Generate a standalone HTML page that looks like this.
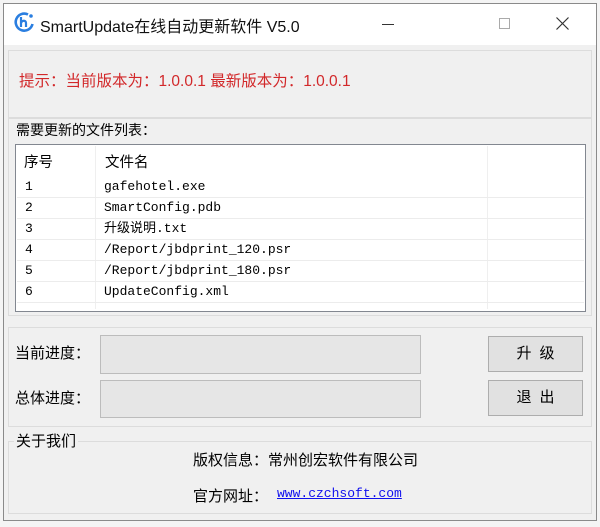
<!DOCTYPE html>
<html><head><meta charset="utf-8"><style>
*{margin:0;padding:0;box-sizing:border-box}
body{width:600px;height:527px;background:#f4f4f4;position:relative;overflow:hidden;font-family:"Liberation Sans","Noto Sans CJK SC",sans-serif;font-size:14px;color:#000}
.a{position:absolute}
.win{left:3px;top:3px;width:594px;height:518px;border:1px solid #8a8a8a;background:#f0f0f0}
.title{left:4px;top:4px;width:592px;height:41px;background:#fff}
.panel{border:1px solid #dcdcdc}
.mono{font-family:"Liberation Mono","Noto Sans CJK SC",monospace;font-size:13px}
.row{left:17px;width:567px;height:21px;border-bottom:1px solid #ececec}
.prog{background:#e6e6e6;border:1px solid #bcbcbc}
.btn{background:#e1e1e1;border:1px solid #adadad;text-align:center;line-height:34px;font-size:15px;letter-spacing:8px;text-indent:8px}
</style></head><body>
<div class="a win"></div>
<div class="a title"></div>
<svg class="a" style="left:14px;top:11px" width="22" height="22" viewBox="0 0 22 22"><path d="M14 3.5A8.5 8.5 0 1 0 18.5 13" fill="none" stroke="#2a7ee0" stroke-width="2.6"/><path d="M7 6v10M7 12c1-3 5-3 5 0v4" fill="none" stroke="#2a7ee0" stroke-width="2.2"/><circle cx="17" cy="5" r="1.8" fill="#2a7ee0"/></svg>
<div class="a" style="left:40px;top:13px;font-size:16px;color:#111">SmartUpdate在线自动更新软件 V5.0</div>
<div class="a" style="left:382px;top:24px;width:12px;height:1px;background:#333"></div>
<div class="a" style="left:499px;top:18px;width:11px;height:11px;border:1px solid #aaa"></div>
<svg class="a" style="left:556px;top:17px" width="13" height="13"><path d="M0.5 0.5L12.5 12.5M12.5 0.5L0.5 12.5" stroke="#333" stroke-width="1.2"/></svg>

<div class="a panel" style="left:8px;top:50px;width:584px;height:68px"></div>
<div class="a" style="left:19px;top:69px;color:#d2282a;font-size:15.5px">提示：当前版本为：1.0.0.1 最新版本为：1.0.0.1</div>

<div class="a panel" style="left:8px;top:118px;width:584px;height:198px"></div>
<div class="a" style="left:16px;top:120px">需要更新的文件列表：</div>
<div class="a" style="left:15px;top:144px;width:571px;height:168px;background:#fff;border:1px solid #828790"></div>
<div class="a" style="left:95px;top:146px;width:1px;height:163px;background:#efefef"></div>
<div class="a" style="left:487px;top:146px;width:1px;height:163px;background:#efefef"></div>
<div class="a" style="left:24px;top:151px;font-size:14.5px">序号</div>
<div class="a" style="left:105px;top:151px;font-size:14.5px">文件名</div>
<div class="a row" style="top:177px"></div>
<div class="a row" style="top:198px"></div>
<div class="a row" style="top:219px"></div>
<div class="a row" style="top:240px"></div>
<div class="a row" style="top:261px"></div>
<div class="a row" style="top:282px"></div>
<div class="a mono" style="left:25px;top:176px;line-height:21px">1<br>2<br>3<br>4<br>5<br>6</div>
<div class="a mono" style="left:104px;top:176px;line-height:21px">gafehotel.exe<br>SmartConfig.pdb<br>升级说明.txt<br>/Report/jbdprint_120.psr<br>/Report/jbdprint_180.psr<br>UpdateConfig.xml</div>

<div class="a panel" style="left:8px;top:327px;width:584px;height:100px"></div>
<div class="a" style="left:15px;top:342px;font-size:15px">当前进度：</div>
<div class="a" style="left:15px;top:387px;font-size:15px">总体进度：</div>
<div class="a prog" style="left:100px;top:335px;width:321px;height:39px"></div>
<div class="a prog" style="left:100px;top:380px;width:321px;height:38px"></div>
<div class="a btn" style="left:488px;top:336px;width:95px;height:36px">升级</div>
<div class="a btn" style="left:488px;top:380px;width:95px;height:36px">退出</div>

<div class="a panel" style="left:8px;top:441px;width:584px;height:73px"></div>
<div class="a" style="left:14px;top:430px;background:#f0f0f0;padding:0 2px;font-size:15px">关于我们</div>
<div class="a" style="left:193px;top:449px;font-size:15px">版权信息：常州创宏软件有限公司</div>
<div class="a" style="left:193px;top:485px;font-size:15px">官方网址：</div>
<div class="a mono" style="left:277px;top:486px;color:#1010ee;text-decoration:underline">www.czchsoft.com</div>
</body></html>
